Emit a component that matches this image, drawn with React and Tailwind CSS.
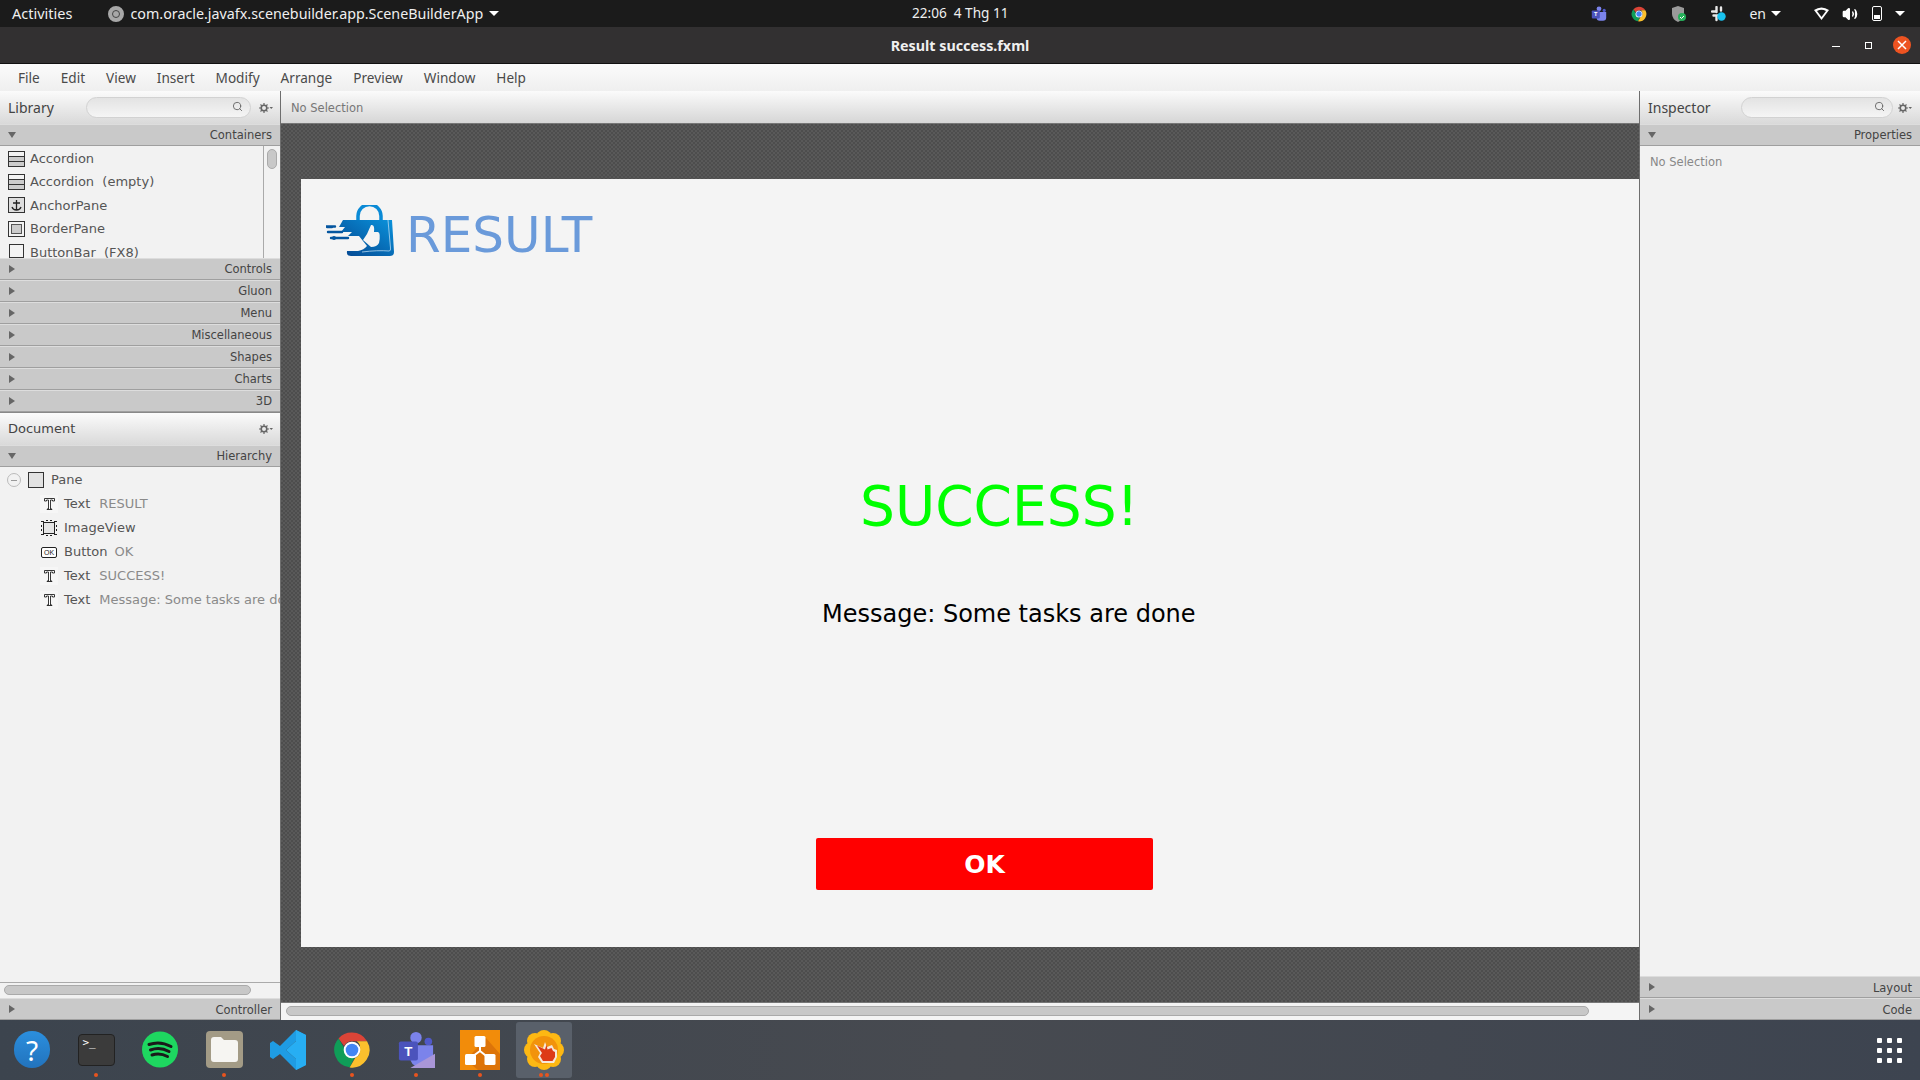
import React from 'react'
import { Search, Volume2 } from 'lucide-react'

const menus = ['File', 'Edit', 'View', 'Insert', 'Modify', 'Arrange', 'Preview', 'Window', 'Help']
const closedSections = ['Controls', 'Gluon', 'Menu', 'Miscellaneous', 'Shapes', 'Charts', '3D']

const Gear = () => (
    <svg width="14" height="10" viewBox="0 0 14 10">
        <circle cx="5" cy="5" r="2.8" fill="none" stroke="#666" strokeWidth="1.6" />
        <path d="M5 0v2M5 8v2M0 5h2M8 5h2M1.5 1.5l1.4 1.4M7.1 7.1l1.4 1.4M1.5 8.5l1.4-1.4M7.1 2.9l1.4-1.4" stroke="#666" strokeWidth="1.2" />
        <path d="M10.5 4h3.5l-1.75 2z" fill="#666" />
    </svg>
)

const Arrow = ({ open }) => (
    <svg width="8" height="8" viewBox="0 0 8 8" className="shrink-0">
        {open ? <path d="M0 1h8L4 7z" fill="#666" /> : <path d="M1 0l6 4-6 4z" fill="#666" />}
    </svg>
)

const SectionBar = ({ label, open, low }) => (
    <div className="h-[22px] shrink-0 flex items-center justify-between pl-2 pr-[8px] bg-[#c9c9c9] border-t border-t-[#dddddd] border-b border-b-[#9f9f9f] font-['DejaVu_Sans',sans-serif] text-[11.500px] text-[#444]">
        <Arrow open={open} />
        <span className={low ? 'pt-[3px]' : 'pt-[1px]'}>{label}</span>
    </div>
)

const SearchBox = ({ className }) => (
    <div className={`h-[21px] rounded-full border border-[#d2d2d2] bg-gradient-to-b from-[#e3e3e3] to-[#f5f5f5] flex items-center justify-end pr-[7px] pb-[2px] ${className}`}>
        <Search className="w-[11px] h-[11px] text-[#666]" strokeWidth={2} />
    </div>
)

const PanelHeader = ({ title, search }) => (
    <div className="h-[33px] shrink-0 flex items-center pl-[8px] pr-[7px] bg-gradient-to-b from-[#fbfbfb] to-[#d9d9d9]">
        <span className="font-['Noto_Sans',sans-serif] text-[14px] text-[#444] w-[78px]">{title}</span>
        {search && <SearchBox className="w-[165px]" />}
        <span className="ml-auto"><Gear /></span>
    </div>
)

const AccordionIcon = () => (
    <svg width="17" height="16" viewBox="0 0 17 16">
        <rect x="0.5" y="0.5" width="16" height="15" fill="#f3f3f3" stroke="#333" />
        <path d="M0 5.5h17M0 10.5h17" stroke="#333" />
        <rect x="1" y="11" width="15" height="4" fill="#ccc" />
        <rect x="1" y="6" width="15" height="4" fill="#ccc" />
    </svg>
)

const AnchorIcon = () => (
    <svg width="17" height="16" viewBox="0 0 17 16">
        <rect x="0.5" y="0.5" width="16" height="15" fill="#ddd" stroke="#333" />
        <path d="M8.5 3v10M5 6h7M4 10q1 3 4.5 3t4.5-3" fill="none" stroke="#222" strokeWidth="1.3" />
    </svg>
)

const BorderIcon = () => (
    <svg width="17" height="16" viewBox="0 0 17 16">
        <rect x="0.5" y="0.5" width="16" height="15" fill="#f3f3f3" stroke="#333" />
        <rect x="3.5" y="3.5" width="10" height="9" fill="#ccc" stroke="#555" />
    </svg>
)

const BarIcon = () => (
    <svg width="17" height="16" viewBox="0 0 17 16">
        <rect x="1.5" y="0.5" width="14" height="13" fill="#f3f3f3" stroke="#333" />
        <path d="M0 14.5h17" stroke="#333" />
    </svg>
)

const TextIcon = () => (
    <span className="w-[18px] h-[18px] shrink-0 bg-[#f6f6f6] flex items-center justify-center">
        <svg width="11" height="12" viewBox="0 0 11 12">
            <path d="M0.5 3V0.5h10V3M0.5 3h2V2h2v9H3v0.5h5V11H6.500V2h2v1h2" fill="#fff" stroke="#222" strokeWidth="0.9" />
        </svg>
    </span>
)

const ImageIcon = () => (
    <span className="w-[18px] h-[18px] shrink-0 flex items-center justify-center">
        <svg width="16" height="16" viewBox="0 0 16 16">
            <rect x="2.500" y="2.500" width="11" height="11" fill="#e6e6e6" stroke="#222" />
            <path d="M0 1.500h3M5 .5h2M9 .5h2M13 1.500h3M.5 5v2M.5 9v2M15.500 5v2M15.500 9v2M0 14.500h3M5 15.500h2M9 15.500h2M13 14.500h3" stroke="#222" />
        </svg>
    </span>
)

const ButtonIcon = () => (
    <span className="w-[18px] h-[18px] shrink-0 flex items-center justify-center">
        <span className="w-[16px] h-[11px] border border-[#222] rounded-[2px] bg-white flex items-center justify-center text-[7px] leading-none text-[#222] font-['Liberation_Sans',sans-serif]">OK</span>
    </span>
)

const libraryRows = [
    { icon: <AccordionIcon />, label: 'Accordion' },
    { icon: <AccordionIcon />, label: 'Accordion\u00a0\u00a0(empty)' },
    { icon: <AnchorIcon />, label: 'AnchorPane' },
    { icon: <BorderIcon />, label: 'BorderPane' },
    { icon: <BarIcon />, label: 'ButtonBar\u00a0\u00a0(FX8)' },
]

const treeRows = [
    { icon: <TextIcon />, type: 'Text', value: 'RESULT', gap: 'ml-[9px]' },
    { icon: <ImageIcon />, type: 'ImageView', value: '', gap: '' },
    { icon: <ButtonIcon />, type: 'Button', value: 'OK', gap: 'ml-[7px]' },
    { icon: <TextIcon />, type: 'Text', value: 'SUCCESS!', gap: 'ml-[9px]' },
    { icon: <TextIcon />, type: 'Text', value: 'Message: Some tasks are done', gap: 'ml-[9px]' },
]

const BagLogo = () => (
    <svg width="70" height="55" viewBox="0 0 70 55">
        <defs>
            <linearGradient id="bag" x1="0" y1="1" x2="1" y2="0">
                <stop offset="0" stopColor="#04458f" />
                <stop offset="1" stopColor="#0a93dc" />
            </linearGradient>
        </defs>
        <path d="M32 16V11a11.500 11.500 0 0 1 23 0v5" fill="none" stroke="#0a8ad6" strokeWidth="3.500" />
        <path d="M17 15H66L68 47Q68 51 64 51H25Q20 51 21 46H32Q38 45 41 41L33 31H22L26 27H15L19 22H13z" fill="url(#bag)" />
        <path d="M37 35L41 29L45 20Q49 19 48 27H52Q55 28 53 38Q51 42 45 42z" fill="#f4f4f4" />
        <path d="M36 47Q52 45 63 46Q65 46 64.500 43L62 15" stroke="#b5d8f0" strokeWidth="0.8" fill="none" />
        <path d="M0 21.500H9M2 27H16M5 33H22M1 22H6" stroke="#04559f" strokeWidth="2.400" strokeLinecap="round" />
        <circle cx="8" cy="33" r="2" fill="#04559f" />
    </svg>
)

const Chrome = ({ size }) => (
    <svg width={size} height={size} viewBox="0 0 48 48">
        <path d="M24 2a22 22 0 0 1 19 11H24a11 11 0 0 0-10 6L7 9.500A22 22 0 0 1 24 2z" fill="#db4437" />
        <path d="M7 9.500L15 23a10 10 0 0 0 12 11L21 45.800A22 22 0 0 1 7 9.500z" fill="#0f9d58" />
        <path d="M43 13a22 22 0 0 1-22 33L28 34a10 10 0 0 0 6-11 10 10 0 0 0-4-10z" fill="#fbc02d" />
        <circle cx="24" cy="24" r="10.500" fill="#fff" />
        <circle cx="24" cy="24" r="8" fill="#4285f4" />
    </svg>
)

const Teams = ({ size, preview }) => (
    <svg width={size} height={size} viewBox="0 0 40 40">
        <circle cx="20" cy="7" r="6" fill="#7b83eb" />
        <circle cx="33" cy="11" r="4" fill="#5059c9" />
        <path d="M14 15h24v14a8 8 0 0 1-8 8H22a8 8 0 0 1-8-8z" fill="#7b83eb" />
        <rect x="2" y="11" width="20" height="20" rx="2" fill="#4b53bc" />
        <text x="12" y="26" textAnchor="middle" fontSize="14" fontWeight="bold" fill="#fff" fontFamily="Liberation Sans, sans-serif">T</text>
        {preview && <path d="M14 39L40 24V39z" fill="#a996d8" />}
    </svg>
)

const Slack = () => (
    <svg width="16" height="16" viewBox="0 0 16 16">
        <path d="M5.500 1v5M1 5.500h3M10 1.500v3M7.500 9.500h-5M5.500 11v3" stroke="#e8e8e8" strokeWidth="2.400" strokeLinecap="round" />
        <circle cx="10.500" cy="10.500" r="4.200" fill="#19c2ef" />
    </svg>
)

const Shield = () => (
    <svg width="16" height="16" viewBox="0 0 16 16">
        <path d="M7 0l6 2v6q0 5-6 8-6-3-6-8V2z" fill="#9a9a9a" />
        <circle cx="11" cy="11" r="4" fill="#25b15a" />
        <path d="M9 11l1.500 1.500L13 10" stroke="#fff" strokeWidth="1" fill="none" />
    </svg>
)

const Caret = () => <span className="block w-0 h-0 border-x-[5px] border-x-transparent border-t-[5px] border-t-white" />

const TopBar = () => (
    <div className="h-[27px] shrink-0 bg-[#1b1b1b] text-[#efefef] flex items-center font-['Noto_Sans',sans-serif] text-[14.500px] relative">
        <span className="ml-[12px]">Activities</span>
        <span className="ml-[36px] w-[16px] h-[16px] rounded-full bg-[#a8a8a8] border-[3px] border-[#a8a8a8] flex items-center justify-center">
            <span className="w-[8px] h-[8px] rounded-full border border-[#444]" />
        </span>
        <span className="ml-[6px] text-[14.300px]">com.oracle.javafx.scenebuilder.app.SceneBuilderApp</span>
        <span className="ml-[6px] flex"><Caret /></span>
        <span className="absolute left-[912px] text-[13.600px]">22:06&nbsp;&nbsp;4 Thg 11</span>
        <div className="ml-auto flex items-center">
            <span className="w-[16px] flex justify-center"><Teams size={16} /></span>
            <span className="ml-[24px] w-[16px]"><Chrome size={16} /></span>
            <span className="ml-[24px] w-[16px]"><Shield /></span>
            <span className="ml-[24px] w-[16px]"><Slack /></span>
            <span className="ml-[22px] text-[14px]">en</span>
            <span className="ml-[5px] flex"><Caret /></span>
            <svg className="ml-[33px]" width="15" height="13" viewBox="0 0 15 13">
                <path d="M0 3Q7.500-2 15 3L7.500 13z" fill="#fff" />
                <path d="M3 4Q7.500 1.500 12 4L7.500 10z" fill="#1b1b1b" />
            </svg>
            <Volume2 className="ml-[13px] w-[16px] h-[16px] text-white fill-white" strokeWidth={2} />
            <span className="ml-[14px] w-[10px] h-[15px] rounded-[2px] border border-white flex items-end p-[1px]">
                <span className="w-full h-[4px] bg-white" />
            </span>
            <span className="ml-[13px] mr-[15px] flex"><Caret /></span>
        </div>
    </div>
)

const TitleBar = () => (
    <div className="h-[37px] shrink-0 pt-[1px] bg-[#323031] border-b border-[#111] flex items-center justify-center relative font-['Noto_Sans',sans-serif] text-[14.300px] font-bold text-[#efefef]">
        Result success.fxml
        <div className="absolute right-[9px] top-[9px] flex items-center">
            <span className="w-[8px] h-px bg-white mt-[3px]" />
            <span className="ml-[25px] w-[7px] h-[7px] border border-white" />
            <span className="ml-[21px] w-[18px] h-[18px] rounded-full bg-[#ed5321] flex items-center justify-center">
                <svg width="10" height="10" viewBox="0 0 10 10"><path d="M1 1l8 8M9 1l-8 8" stroke="#fff" strokeWidth="1.500" /></svg>
            </span>
        </div>
    </div>
)

const MenuBar = () => (
    <div className="h-[27px] shrink-0 pt-[1px] bg-gradient-to-b from-[#fbfbfb] to-[#efefef] flex items-center pl-[18px] gap-[21px] font-['Noto_Sans',sans-serif] text-[13.600px] text-[#4a4a4a]">
        {menus.map((menu) => <span key={menu}>{menu}</span>)}
    </div>
)

const LeftPanel = () => (
    <div className="w-[281px] shrink-0 flex flex-col bg-[#f2f2f2] border-r border-[#6e6e6e] font-['DejaVu_Sans',sans-serif]">
        <PanelHeader title="Library" search />
        <SectionBar label="Containers" open />
        <div className="h-[112px] shrink-0 overflow-hidden relative pt-[1px] text-[13px] text-[#555]">
            {libraryRows.map((row) => (
                <div key={row.label} className="h-[23.400px] flex items-center gap-[5px] pl-[8px] whitespace-nowrap">
                    {row.icon}
                    <span>{row.label}</span>
                </div>
            ))}
            <div className="absolute right-0 top-0 bottom-0 w-[17px] bg-[#f2f2f2] border-l border-[#aaa]">
                <div className="mx-auto mt-[3px] w-[10px] h-[20px] rounded-full bg-[#c8c8c8] border border-[#aaa]" />
            </div>
        </div>
        {closedSections.map((section) => <SectionBar key={section} label={section} />)}
        <div className="h-[33px] shrink-0 flex items-center justify-between pl-[8px] pr-[7px] bg-gradient-to-b from-[#fbfbfb] to-[#d9d9d9] border-t border-[#888] text-[13px] text-[#444]">
            <span>Document</span>
            <Gear />
        </div>
        <SectionBar label="Hierarchy" open />
        <div className="flex-1 overflow-hidden pt-[1px] text-[13px] text-[#555] whitespace-nowrap">
            <div className="h-[24px] flex items-center pl-[7px]">
                <span className="w-[14px] h-[14px] rounded-full border border-[#bbb] flex items-center justify-center">
                    <span className="w-[6px] h-px bg-[#999]" />
                </span>
                <span className="ml-[7px] w-[16px] h-[16px] bg-[#e2e2e2] border border-[#333]" />
                <span className="ml-[7px]">Pane</span>
            </div>
            {treeRows.map((row, i) => (
                <div key={i} className="h-[24px] flex items-center pl-[40px]">
                    {row.icon}
                    <span className="ml-[6px] shrink-0">{row.type}</span>
                    {row.value && <span className={`${row.gap} shrink-0 text-[#8a8a8a]`}>{row.value}</span>}
                </div>
            ))}
        </div>
        <div className="h-[16px] shrink-0 border-t border-[#aaa] pt-[2px] pl-[4px] pb-[1px]">
            <div className="w-[247px] h-[10px] rounded-full bg-[#c8c8c8] border border-[#aaa]" />
        </div>
        <SectionBar label="Controller" low />
    </div>
)

const CenterPanel = () => (
    <div className="flex-1 flex flex-col min-w-0">
        <div className="h-[33px] shrink-0 flex items-center pl-[10px] pt-[4px] bg-gradient-to-b from-[#fbfbfb] to-[#d6d6d6] border-b border-[#777] font-['DejaVu_Sans',sans-serif] text-[11.500px] text-[#777]">
            No Selection
        </div>
        <div className="flex-1 pt-[55px] pb-[55px] pl-[20px] bg-[#525252] bg-[repeating-conic-gradient(#4d4d4d_0_25%,#595959_0_50%)] bg-[length:4px_4px]">
            {/* Scene Builder pane: nodes sit at their own coordinates */}
            <div className="relative h-full bg-[#f4f4f4] font-['DejaVu_Sans',sans-serif]">
                <div className="absolute left-[25px] top-[26px]"><BagLogo /></div>
                <span className="absolute left-[105px] top-[21px] text-[50px] leading-[70px] text-[#6a9ada]">RESULT</span>
                <span className="absolute left-[559px] top-[292px] text-[55px] leading-[70px] text-[#00ff00] whitespace-nowrap">SUCCESS!</span>
                <span className="absolute left-[521px] top-[417px] text-[24px] leading-[36px] text-black whitespace-nowrap">Message: Some tasks are done</span>
                <button className="absolute left-[515px] top-[659px] w-[337px] h-[52px] pt-[1px] rounded-[2px] bg-[#ff0000] text-white font-bold text-[25px]">OK</button>
            </div>
        </div>
        <div className="h-[18px] shrink-0 bg-[#f4f4f4] border-t border-[#777] pt-[3px] pl-[5px]">
            <div className="w-[1303px] h-[10px] rounded-full bg-[#c8c8c8] border border-[#aaa]" />
        </div>
    </div>
)

const RightPanel = () => (
    <div className="w-[281px] shrink-0 flex flex-col bg-[#f2f2f2] border-l border-[#6e6e6e] font-['DejaVu_Sans',sans-serif]">
        <div className="h-[33px] shrink-0 flex items-center pl-[8px] pr-[8px] bg-gradient-to-b from-[#fbfbfb] to-[#d9d9d9]">
            <span className="font-['Noto_Sans',sans-serif] text-[14px] text-[#444] w-[93px]">Inspector</span>
            <SearchBox className="w-[152px]" />
            <span className="ml-auto"><Gear /></span>
        </div>
        <SectionBar label="Properties" open />
        <div className="flex-1 pl-[10px] pt-[8px] text-[11.500px] text-[#888]">No Selection</div>
        <SectionBar label="Layout" low />
        <SectionBar label="Code" low />
    </div>
)

const DockSlot = ({ dots = 0, active, children }) => (
    <div className="w-[64px] h-full flex justify-center relative">
        {active && <div className="absolute left-[4px] right-[4px] top-[2px] bottom-[2px] rounded-[3px] bg-[#59606a]" />}
        <div className="relative flex items-center justify-center h-full pb-[1px]">{children}</div>
        {dots > 0 && (
            <div className="absolute bottom-[3px] left-0 right-0 flex justify-center gap-[2px]">
                {Array.from({ length: dots }).map((_, i) => <span key={i} className="w-[4px] h-[4px] rounded-full bg-[#e9541e]" />)}
            </div>
        )}
    </div>
)

const Dock = () => (
    <div className="h-[60px] shrink-0 flex items-center bg-gradient-to-r from-[#3c444e] via-[#474a50] to-[#3d4450]">
        <DockSlot>
            <div className="w-[36px] h-[37px] rounded-full bg-gradient-to-b from-[#2b8fde] to-[#2273bd] flex items-center justify-center text-white text-[28px] font-['Noto_Sans',sans-serif]">?</div>
        </DockSlot>
        <DockSlot dots={1}>
            <div className="w-[37px] h-[32px] rounded-[4px] bg-[#3b3b3b] border border-[#222] pl-[4px] pt-[1px] text-white text-[11px] leading-[14px] font-['DejaVu_Sans_Mono',monospace]">&gt;_</div>
        </DockSlot>
        <DockSlot>
            <svg width="36" height="37" viewBox="0 0 36 36">
                <circle cx="18" cy="18" r="18" fill="#1ed760" />
                <path d="M7 13Q18 9 29 15M8.500 18.500Q18 15 27 20M10 23.500Q18 21 25.500 25" fill="none" stroke="#1a1a1a" strokeWidth="3" strokeLinecap="round" />
            </svg>
        </DockSlot>
        <DockSlot dots={1}>
            <div className="w-[37px] h-[37px] rounded-[4px] bg-[#a39b86] flex items-center justify-center">
                <svg width="27" height="25" viewBox="0 0 27 25">
                    <path d="M0 3Q0 0 3 0H10L13 3H24Q27 3 27 6V22Q27 25 24 25H3Q0 25 0 22z" fill="#f6f5f2" />
                </svg>
            </div>
        </DockSlot>
        <DockSlot>
            <svg width="36" height="40" viewBox="0 0 36 40">
                <path d="M26 0L36 5V35L26 40L10 24L3 29L0 27V13L3 11L10 16z M26 11L16 20L26 29z" fill="#1f9ce3" fillRule="evenodd" />
                <path d="M26 0L36 5V35L26 40z M26 11L16 20L26 29z" fill="#27aef3" fillRule="evenodd" />
            </svg>
        </DockSlot>
        <DockSlot dots={1}><Chrome size={38} /></DockSlot>
        <DockSlot dots={1}><Teams size={38} preview /></DockSlot>
        <DockSlot dots={1}>
            <svg width="40" height="40" viewBox="0 0 40 40">
                <rect width="40" height="40" fill="#f28c0a" />
                <path d="M26 8L40 24V40H18L6 30z" fill="#dd7409" />
                <path d="M20 12V21M20 21L9 29M20 21L30 29" stroke="#fff" strokeWidth="2" fill="none" />
                <rect x="14.500" y="6" width="11" height="11" rx="1.500" fill="#fff" />
                <rect x="5" y="24" width="11" height="11" rx="1.500" fill="#fff" />
                <rect x="24.500" y="24" width="11" height="11" rx="1.500" fill="#fff" />
            </svg>
        </DockSlot>
        <DockSlot active dots={2}>
            <svg width="40" height="40" viewBox="0 0 40 40">
                <g fill="#fdb813">
                    <circle cx="20" cy="8" r="8" />
                    <circle cx="20" cy="32" r="8" />
                    <circle cx="8" cy="20" r="8" />
                    <circle cx="32" cy="20" r="8" />
                    <circle cx="11" cy="11" r="8" />
                    <circle cx="29" cy="11" r="8" />
                    <circle cx="11" cy="29" r="8" />
                    <circle cx="29" cy="29" r="8" />
                </g>
                <circle cx="20" cy="20" r="14" fill="#f2930b" />
                <path d="M10 14l9 4 2-6 2 5 5-2 2 4 3 1v7l-3 6H18l-4-6 2-4z" fill="#f6e7d8" />
                <path d="M13 15.500l8 4 1.500-5 1 5 4-1.500 1.500 3 2 1v5l-2.500 4H19l-3-5 2-3z" fill="#dd3a17" />
            </svg>
        </DockSlot>
        <div className="ml-auto mr-[18px] grid grid-cols-3 gap-[5px]">
            {Array.from({ length: 9 }).map((_, i) => <span key={i} className="w-[5px] h-[5px] rounded-[1px] bg-white" />)}
        </div>
    </div>
)

const App = () => {
    return (
        <div className="w-[1920px] h-[1080px] flex flex-col overflow-hidden">
            <TopBar />
            <TitleBar />
            <MenuBar />
            <div className="flex-1 flex min-h-0 bg-[#f2f2f2]">
                <LeftPanel />
                <CenterPanel />
                <RightPanel />
            </div>
            <Dock />
        </div>
    )
}

export default App
